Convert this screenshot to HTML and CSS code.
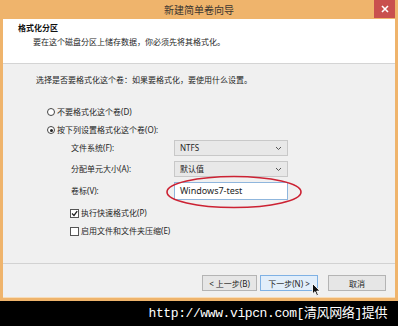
FILE: index.html
```html
<!DOCTYPE html>
<html lang="zh-CN">
<head>
    <meta charset="UTF-8">
    <title>新建简单卷向导</title>
    <link rel="stylesheet" href="styles.css">
</head>
<body>
    <div class="window">
        <div class="titlebar">
            <span></span>
            <span class="title">新建简单卷向导</span>
            <button class="close">
                <svg width="8" height="8" viewBox="0 0 8 8"><path d="M1 1 L7 7 M7 1 L1 7" stroke="#fff" stroke-width="1.6"/></svg>
            </button>
        </div>
        <div class="client">
            <div class="header">
                <div class="heading">格式化分区</div>
                <div class="subheading">要在这个磁盘分区上储存数据，你必须先将其格式化。</div>
            </div>
            <div class="content">
                <p class="prompt">选择是否要格式化这个卷：如果要格式化，要使用什么设置。</p>
                <div class="options">
                    <div class="radio"><span class="circle"></span>不要格式化这个卷(D)</div>
                    <div class="radio"><span class="circle on"></span>按下列设置格式化这个卷(O):</div>
                    <div class="fields">
                        <span>文件系统(F):</span>
                        <div class="select">NTFS
                            <svg width="7" height="5" viewBox="0 0 7 5"><path d="M1 1 L3.5 3.5 L6 1" fill="none" stroke="#555" stroke-width="1"/></svg>
                        </div>
                        <span>分配单元大小(A):</span>
                        <div class="select">默认值
                            <svg width="7" height="5" viewBox="0 0 7 5"><path d="M1 1 L3.5 3.5 L6 1" fill="none" stroke="#555" stroke-width="1"/></svg>
                        </div>
                        <span>卷标(V):</span>
                        <div class="textbox">Windows7-test</div>
                    </div>
                    <div class="check">
                        <span class="box">
                            <svg width="7" height="7" viewBox="0 0 7 7"><path d="M1 3.5 L3 5.5 L6.2 1.2" fill="none" stroke="#222" stroke-width="1.3"/></svg>
                        </span>执行快速格式化(P)
                    </div>
                    <div class="check"><span class="box"></span>启用文件和文件夹压缩(E)</div>
                </div>
            </div>
            <div class="footer">
                <button class="btn">&lt; 上一步(B)</button>
                <button class="btn primary">下一步(N) &gt;</button>
                <button class="btn cancel">取消</button>
            </div>
        </div>

        <svg class="ring" width="140" height="36" viewBox="0 0 140 36">
            <ellipse cx="70" cy="18" rx="67" ry="15.5" fill="none" stroke="#cc2233" stroke-width="1.6"/>
        </svg>
        <svg class="cursor" width="9" height="14" viewBox="0 0 9 14">
            <path d="M0.5 0.5 L0.5 11 L3 8.6 L4.8 12.8 L6.4 12.1 L4.7 8.1 L8 8.1 Z" fill="#111" stroke="#fff" stroke-width="0.9"/>
        </svg>
    </div>
    <div class="watermark">http://www.vipcn.com[清风网络]提供</div>
</body>
</html>
```

FILE: styles.css
```css
body {
    margin: 0;
    width: 398px;
    height: 326px;
    background: #000;
    font-family: "Noto Sans", "Noto Sans CJK SC", sans-serif;
    font-size: 8px;
    color: #1e1e1e;
    overflow: hidden;
}
.window {
    position: relative;
    height: 301px;
    box-sizing: border-box;
    padding: 0 3px 4px;
    background: #efb46c;
    display: flex;
    flex-direction: column;
}
.titlebar {
    height: 19px;
    display: grid;
    grid-template-columns: 1fr auto 1fr;
    align-items: start;
}
.title {
    font-size: 10px;
    line-height: 20px;
    color: #3c3630;
}
.close {
    justify-self: end;
    width: 21px;
    height: 18px;
    border: none;
    padding: 0;
    background: #c9504e;
    display: flex;
    align-items: center;
    justify-content: center;
}
.client {
    flex: 1;
    background: #f0f0f0;
    display: flex;
    flex-direction: column;
    box-shadow: 0 1px 0 #f7dcb8;
}
.header {
    height: 45px;
    box-sizing: border-box;
    background: #fff;
    border-bottom: 1px solid #d4d4d4;
    padding: 3px 0 0 15px;
    line-height: 12px;
}
.heading {
    font-weight: bold;
    color: #111;
}
.subheading {
    margin-top: 2px;
    padding-left: 15px;
}
.content {
    flex: 1;
    padding: 10px 0 0 33px;
    line-height: 12px;
}
.prompt {
    margin: 0;
}
.options {
    margin-top: 20px;
    padding-left: 11px;
}
.radio, .check {
    display: flex;
    align-items: center;
    height: 12px;
}
.radio + .radio {
    margin-top: 6px;
}
.circle {
    width: 8px;
    height: 8px;
    border: 1px solid #444;
    border-radius: 50%;
    background: #fff;
    margin-right: 2px;
    box-sizing: border-box;
    position: relative;
}
.circle.on::after {
    content: "";
    position: absolute;
    left: 1.5px;
    top: 1.5px;
    width: 3px;
    height: 3px;
    border-radius: 50%;
    background: #222;
}
.fields {
    display: grid;
    grid-template-columns: 103px 114px;
    grid-template-rows: 16px 16px 18px;
    row-gap: 5px;
    align-items: center;
    margin: 4px 0 0 24px;
}
.select, .textbox {
    height: 100%;
    box-sizing: border-box;
    display: flex;
    align-items: center;
    justify-content: space-between;
    padding: 0 5px 0 5px;
}
.select {
    background: #e8e8e8;
    border: 1px solid #c8c8c8;
}
.textbox {
    background: #fff;
    border: 1px solid #8fb6dd;
    font-size: 9px;
}
.check {
    margin-left: 23px;
}
.fields + .check {
    margin-top: 7px;
}
.check + .check {
    margin-top: 6px;
}
.box {
    width: 9px;
    height: 9px;
    box-sizing: border-box;
    border: 1px solid #555;
    background: #fff;
    margin-right: 2px;
    display: flex;
    align-items: center;
    justify-content: center;
}
.footer {
    height: 34px;
    box-sizing: border-box;
    border-top: 1px solid #d2d2d2;
    padding: 11px 9px 0 0;
    display: flex;
    justify-content: flex-end;
    align-items: flex-start;
}
.btn {
    height: 16px;
    width: 55px;
    padding: 0;
    font-family: inherit;
    font-size: 8px;
    color: #1e1e1e;
    background: #e6e6e6;
    border: 1px solid #b4b4b4;
}
.btn.primary {
    width: 58px;
    margin-left: 3px;
    background: #e2eefa;
    border-color: #7fb1e4;
}
.btn.cancel {
    width: 58px;
    margin-left: 10px;
}
.ring {
    position: absolute;
    left: 164px;
    top: 174px;
}
.cursor {
    position: absolute;
    left: 312px;
    top: 283px;
}
.watermark {
    height: 25px;
    line-height: 25px;
    text-align: right;
    padding-right: 11px;
    color: #fff;
    font-family: "Liberation Mono", "Noto Sans CJK SC", monospace;
    font-size: 13px;
    letter-spacing: -0.4px;
}
```
